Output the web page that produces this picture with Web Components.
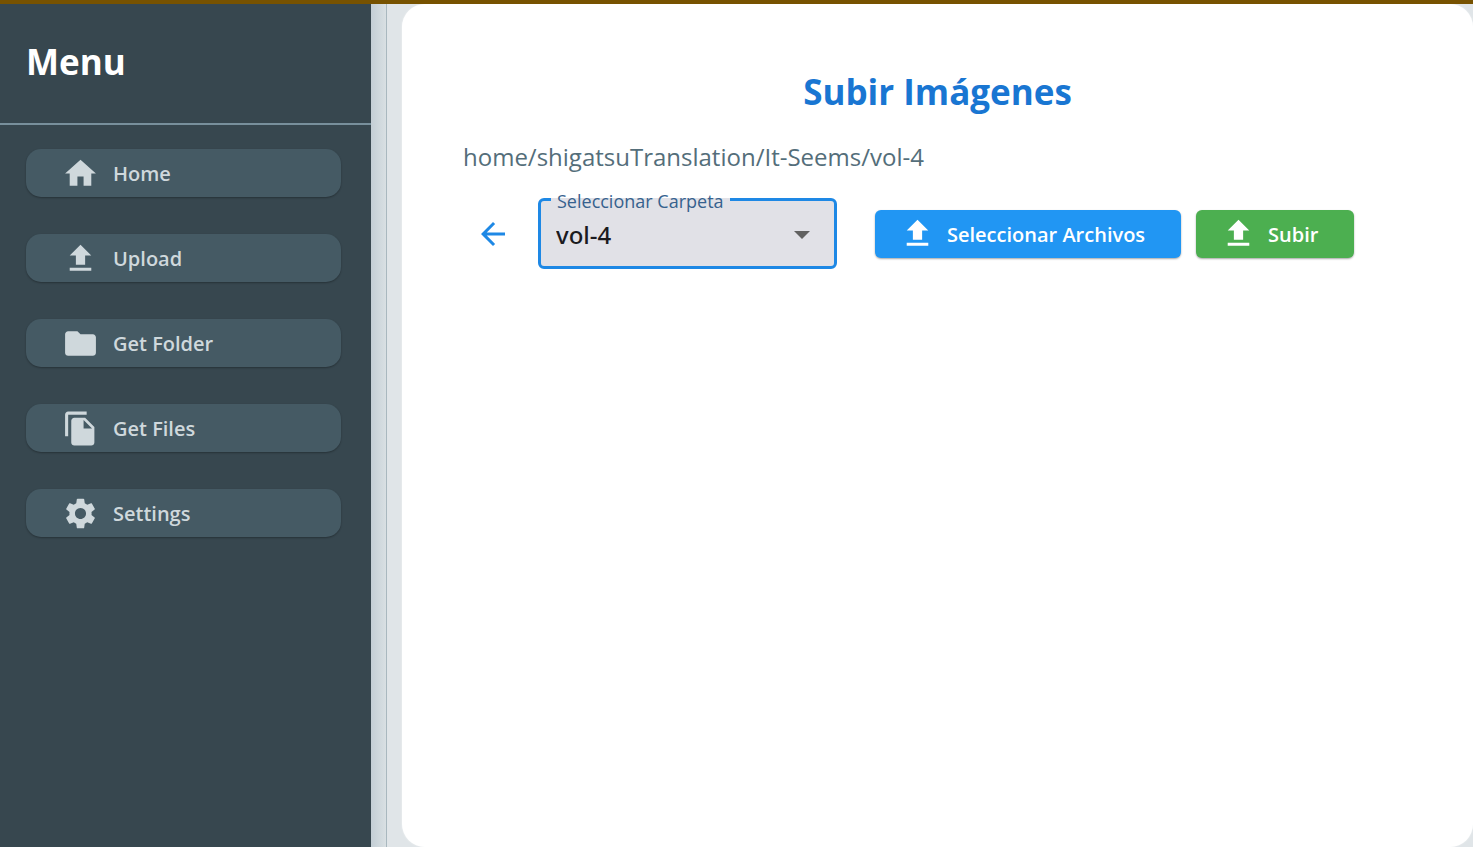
<!DOCTYPE html>
<html lang="es">
<head>
<meta charset="utf-8">
<title>Subir Imágenes</title>
<style>
  html, body { height: 100%; margin: 0; }
  body { font-family: "Open Sans", "Noto Sans", sans-serif; background: #e0e5e8; }
  .actions { display: flex; gap: 15px; }
</style>
</head>
<body>
<app-shell>
  <side-menu slot="menu" heading="Menu">
    <menu-button icon="home">Home</menu-button>
    <menu-button icon="upload">Upload</menu-button>
    <menu-button icon="folder">Get Folder</menu-button>
    <menu-button icon="files">Get Files</menu-button>
    <menu-button icon="settings">Settings</menu-button>
  </side-menu>
  <upload-panel heading="Subir Imágenes" path="home/shigatsuTranslation/It-Seems/vol-4">
    <back-button></back-button>
    <folder-select label="Seleccionar Carpeta" value="vol-4"></folder-select>
    <div class="actions">
      <action-button tone="blue">Seleccionar Archivos</action-button>
      <action-button tone="green">Subir</action-button>
    </div>
  </upload-panel>
</app-shell>

<script>
const ICONS = {
  home: 'M10 20v-6h4v6h5v-8h3L12 3 2 12h3v8z',
  upload: 'M5 20h14v-2H5v2zm0-10h4v6h6v-6h4l-7-7-7 7z',
  folder: 'M10 4H4c-1.1 0-1.99.9-1.99 2L2 18c0 1.1.9 2 2 2h16c1.1 0 2-.9 2-2V8c0-1.1-.9-2-2-2h-8l-2-2z',
  files: 'M16 1H4c-1.1 0-2 .9-2 2v14h2V3h12V1zm-1 4l6 6v10c0 1.1-.9 2-2 2H7.99C6.89 23 6 22.1 6 21l.01-14c0-1.1.89-2 1.99-2h7zm-1 7h5.5L14 6.5V12z',
  settings: 'M19.14 12.94c.04-.3.06-.61.06-.94 0-.32-.02-.64-.07-.94l2.03-1.58c.18-.14.23-.41.12-.61l-1.92-3.32c-.12-.22-.37-.29-.59-.22l-2.39.96c-.5-.38-1.03-.7-1.62-.94l-.36-2.54c-.04-.24-.24-.41-.48-.41h-3.84c-.24 0-.43.17-.47.41l-.36 2.54c-.59.24-1.13.57-1.62.94l-2.39-.96c-.22-.08-.47 0-.59.22L2.74 8.87c-.12.21-.08.47.12.61l2.03 1.58c-.05.3-.09.63-.09.94s.02.64.07.94l-2.03 1.58c-.18.14-.23.41-.12.61l1.92 3.32c.12.22.37.29.59.22l2.39-.96c.5.38 1.03.7 1.62.94l.36 2.54c.05.24.24.41.48.41h3.84c.24 0 .44-.17.47-.41l.36-2.54c.59-.24 1.13-.56 1.62-.94l2.39.96c.22.08.47 0 .59-.22l1.92-3.32c.12-.22.07-.47-.12-.61l-2.01-1.58zM12 15.6c-1.98 0-3.6-1.62-3.6-3.6s1.62-3.6 3.6-3.6 3.6 1.62 3.6 3.6-1.62 3.6-3.6 3.6z',
  back: 'M20 11H7.83l5.59-5.59L12 4l-8 8 8 8 1.41-1.41L7.83 13H20v-2z'
};
const icon = name => `<svg viewBox="0 0 24 24" aria-hidden="true"><path d="${ICONS[name]}"/></svg>`;

class Base extends HTMLElement {
  connectedCallback() {
    if (this.shadowRoot) return;
    this.attachShadow({ mode: 'open' }).innerHTML = this.render();
  }
}

customElements.define('app-shell', class extends Base {
  render() {
    return `<style>
      :host { display: flex; flex-direction: column; min-height: 100vh; }
      .bar { height: 4px; background: #775200; }
      .body { flex: 1; display: flex; overflow: hidden; }
      .split { width: 15px; border-right: 1px solid #a9b8bf; margin-right: 15px;
        background: linear-gradient(to right, #c3ced5, #d9e0e3); }
      main { flex: 1; display: flex; min-width: 0; }
      ::slotted(upload-panel) { flex: 1; }
    </style>
    <div class="bar"></div>
    <div class="body"><slot name="menu"></slot><div class="split"></div><main><slot></slot></main></div>`;
  }
});

customElements.define('side-menu', class extends Base {
  render() {
    return `<style>
      :host { display: block; width: 371px; flex: none; background: #37474f; }
      h1 { margin: 0; padding: 34px 26px 37px; border-bottom: 2px solid #78909c;
        font-size: 35px; line-height: 48px; font-weight: 700; color: #fff; }
      nav { display: flex; flex-direction: column; gap: 37px; padding: 24px 30px 24px 26px; }
    </style>
    <h1>${this.getAttribute('heading')}</h1><nav><slot></slot></nav>`;
  }
});

customElements.define('menu-button', class extends Base {
  render() {
    return `<style>
      :host { display: block; }
      button { display: flex; align-items: center; gap: 14px; width: 100%; height: 48px; border: 0;
        padding: 0 36px; border-radius: 15px; background: #455a64; color: #cfd8dc;
        box-shadow: 0 1px 2px rgba(0,0,0,.3); font: 600 20px/28px "Open Sans", sans-serif; }
      svg { width: 37px; height: 37px; fill: currentColor; }
      span { padding-top: 2px; }
    </style>
    <button type="button">${icon(this.getAttribute('icon'))}<span><slot></slot></span></button>`;
  }
});

customElements.define('upload-panel', class extends Base {
  render() {
    return `<style>
      :host { display: block; box-sizing: border-box; padding: 64px 61px; background: #fff;
        border-radius: 23px; box-shadow: 0 0 2px rgba(255,255,255,.6); }
      h2 { margin: 0 0 24px; text-align: center; color: #1976d2; font-size: 35px; line-height: 48px; font-weight: 700; }
      p { margin: 0 0 24px; color: #546e7a; font-size: 24px; line-height: 34px; }
      .row { display: flex; align-items: center; flex-wrap: wrap; }
    </style>
    <h2>${this.getAttribute('heading')}</h2>
    <p>${this.getAttribute('path')}</p>
    <div class="row"><slot></slot></div>`;
  }
});

customElements.define('back-button', class extends Base {
  render() {
    return `<style>
      :host { display: block; margin-right: 15px; }
      button { display: flex; align-items: center; justify-content: center; width: 60px; height: 60px;
        border: 0; padding: 0; background: none; color: #1e88e5; }
      svg { width: 36px; height: 36px; fill: currentColor; }
    </style>
    <button type="button" aria-label="Volver">${icon('back')}</button>`;
  }
});

customElements.define('folder-select', class extends Base {
  render() {
    return `<style>
      :host { display: block; position: relative; width: 299px; margin-right: 38px; }
      select { display: block; appearance: none; width: 100%; height: 71px; margin: 0; padding: 2px 48px 0 15px;
        border: 3px solid #1e88e5; border-radius: 6px; outline: 0; background: #e1e1e7; color: #1b1b1f;
        font: 500 24px/34px "Noto Sans", sans-serif; }
      label { position: absolute; top: 0; left: 13px; padding: 0 6px; line-height: 6px; font-size: 18px;
        background: #e1e1e7; color: #36618e; white-space: nowrap; }
      svg { position: absolute; right: 27px; top: 33px; width: 16px; height: 8px; fill: #616161; pointer-events: none; }
    </style>
    <select id="folder"><option>${this.getAttribute('value')}</option></select>
    <label for="folder">${this.getAttribute('label')}</label>
    <svg viewBox="0 0 16 8" aria-hidden="true"><path d="M0 0h16l-8 8z"/></svg>`;
  }
});

customElements.define('action-button', class extends Base {
  render() {
    return `<style>
      :host { display: block; }
      :host([tone="blue"]) { --fill: #2196f3; }
      :host([tone="green"]) { --fill: #4caf50; }
      button { display: flex; align-items: center; gap: 11px; height: 48px; border: 0; padding: 0 36px 0 24px;
        border-radius: 6px; background: var(--fill); color: #fff; white-space: nowrap;
        box-shadow: 0 1px 2px rgba(0,0,0,.35); font: 600 20px/28px "Open Sans", sans-serif; }
      svg { width: 37px; height: 37px; fill: currentColor; }
      span { padding-top: 2px; }
    </style>
    <button type="button">${icon('upload')}<span><slot></slot></span></button>`;
  }
});
</script>
</body>
</html>
